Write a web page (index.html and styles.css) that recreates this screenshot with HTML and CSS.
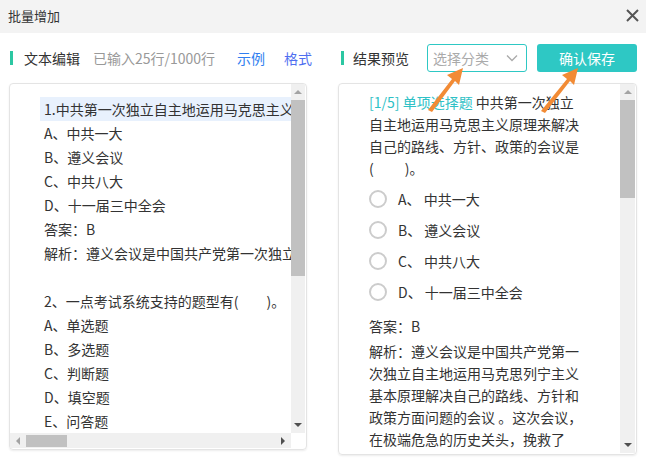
FILE: index.html
```html
<!DOCTYPE html>
<html lang="zh-CN">
<head>
    <meta charset="UTF-8">
    <title>批量增加</title>
    <link rel="stylesheet" href="styles.css">
</head>
<body>
    <div class="dialog">
        <div class="dialog-head">
            <span class="dialog-title">批量增加</span>
            <span class="close">
                <svg width="13" height="13" viewBox="0 0 13 13"><path d="M1 1L12 12M12 1L1 12" stroke="#555" stroke-width="2"/></svg>
            </span>
        </div>

        <div class="toolbar">
            <div class="tool-left">
                <span class="mark"></span>
                <span class="label">文本编辑</span>
                <span class="count">已输入25行/1000行</span>
                <a class="link">示例</a>
                <a class="link link2">格式</a>
            </div>
            <div class="tool-right">
                <span class="mark"></span>
                <span class="label">结果预览</span>
                <div class="select">
                    <span>选择分类</span>
                    <svg width="12" height="8" viewBox="0 0 12 8"><path d="M1 1.5L6 6.5L11 1.5" fill="none" stroke="#aaa" stroke-width="1.3"/></svg>
                </div>
                <button class="btn">确认保存</button>
            </div>
        </div>

        <div class="panels">
            <div class="panel">
                <div class="editor">
                    <div class="line current">1.中共第一次独立自主地运用马克思主义原理来解决自己的路线、方针、政策的会议是(　　)。</div>
                    <div class="line">A、中共一大</div>
                    <div class="line">B、遵义会议</div>
                    <div class="line">C、中共八大</div>
                    <div class="line">D、十一届三中全会</div>
                    <div class="line">答案：B</div>
                    <div class="line">解析：遵义会议是中国共产党第一次独立自主地运用马克思列宁主义基本原理</div>
                    <div class="line"></div>
                    <div class="line">2、一点考试系统支持的题型有(　　)。</div>
                    <div class="line">A、单选题</div>
                    <div class="line">B、多选题</div>
                    <div class="line">C、判断题</div>
                    <div class="line">D、填空题</div>
                    <div class="line">E、问答题</div>
                </div>
                <div class="vbar">
                    <span class="arr up"></span>
                    <div class="track"><div class="thumb" style="height:176px"></div></div>
                    <span class="arr down dark"></span>
                </div>
                <div class="hbar">
                    <span class="arr left"></span>
                    <div class="htrack"><div class="hthumb" style="width:41px"></div></div>
                    <span class="arr right dark"></span>
                </div>
                <div class="corner"></div>
            </div>

            <div class="panel preview">
                <div class="preview-body">
                    <div class="question">
                        <span class="qtype">[1/5] 单项选择题</span> 中共第一次独立<br>
                        自主地运用马克思主义原理来解决<br>
                        自己的路线、方针、政策的会议是<br>
                        (　　 )。
                    </div>
                    <ul class="options">
                        <li><span class="radio"></span>A、 中共一大</li>
                        <li><span class="radio"></span>B、 遵义会议</li>
                        <li><span class="radio"></span>C、 中共八大</li>
                        <li><span class="radio"></span>D、 十一届三中全会</li>
                    </ul>
                    <div class="answer">答案：B</div>
                    <div class="analysis">
                        解析：遵义会议是中国共产党第一<br>
                        次独立自主地运用马克思列宁主义<br>
                        基本原理解决自己的路线、方针和<br>
                        政策方面问题的会议 。这次会议，<br>
                        在极端危急的历史关头，挽救了<br>
                        党、挽救了红军、挽救了中国革命
                    </div>
                </div>
                <div class="vbar tall">
                    <span class="arr up"></span>
                    <div class="track"><div class="thumb" style="height:98px"></div></div>
                    <span class="arr down dark"></span>
                </div>
            </div>
        </div>

        <!-- 注释箭头 -->
        <svg class="pointers" width="646" height="467" viewBox="0 0 646 467">
            <g fill="#f28b35">
                <path d="M428 110L452 79L447 75L463 68L459 85L455 81L432 112Z"/>
                <path d="M541 111L567 79L562 75L578 68L574 85L570 81L545 113Z"/>
            </g>
        </svg>
    </div>
</body>
</html>
```

FILE: styles.css
```css
body {
    margin: 0;
    font-family: "Noto Sans CJK SC", "Noto Sans", sans-serif;
    color: #333;
    background: #fff;
}
.dialog {
    position: relative;
    width: 646px;
    height: 467px;
    overflow: hidden;
}
.dialog-head {
    height: 33px;
    background: #f3f3f3;
    display: flex;
    align-items: center;
    justify-content: space-between;
    padding: 0 7px 3px 8px;
    box-sizing: border-box;
}
.dialog-title {
    font-size: 13px;
}
.close {
    display: flex;
}
.toolbar {
    display: flex;
    align-items: center;
    height: 28px;
    margin-top: 11px;
    padding-left: 10px;
    font-size: 14px;
    white-space: nowrap;
}
.tool-left,
.tool-right {
    display: flex;
    align-items: center;
    flex: none;
}
.tool-left {
    width: 331px;
}
.tool-left > *,
.tool-right > * {
    flex: none;
}
.mark {
    width: 3px;
    height: 14px;
    background: #2cc7a2;
    margin-right: 11px;
}
.tool-right .mark {
    margin-right: 9px;
}
.label {
    color: #333;
}
.count {
    color: #999;
    margin-left: 13px;
}
.link {
    color: #2f7ef0;
    margin-left: 22px;
    cursor: pointer;
}
.link2 {
    color: #4f6ff0;
    margin-left: 19px;
}
.select {
    width: 100px;
    height: 28px;
    box-sizing: border-box;
    border: 1px solid #2ec8c4;
    border-radius: 3px;
    margin-left: 18px;
    display: flex;
    align-items: center;
    justify-content: space-between;
    padding: 0 8px 0 5px;
    color: #aaa;
}
.btn {
    width: 100px;
    height: 28px;
    margin-left: 10px;
    border: none;
    border-radius: 3px;
    background: #2ec8c4;
    color: #fff;
    font-family: inherit;
    font-size: 14px;
    cursor: pointer;
}
.panels {
    display: flex;
    gap: 31px;
    padding: 11px 9px 0 9px;
}
.panel {
    width: 298px;
    height: 367px;
    box-sizing: border-box;
    border: 1px solid #e4e4e4;
    border-radius: 4px;
    box-shadow: 0 1px 2px rgba(0,0,0,0.08);
    display: grid;
    grid-template-columns: 1fr 14px;
    grid-template-rows: 1fr 15px;
    overflow: hidden;
    padding: 0 1px 1px 0;
}
.editor {
    overflow: hidden;
    padding: 13px 0 0 30px;
    font-size: 14px;
}
.line {
    height: 24px;
    line-height: 24px;
    white-space: nowrap;
    padding-left: 4px;
}
.line.current {
    background: #e8f1fd;
}
.vbar {
    background: #f0f0f0;
    display: flex;
    flex-direction: column;
    align-items: center;
}
.track {
    flex: 1;
    width: 100%;
}
.thumb {
    background: #c1c1c1;
    width: 100%;
}
.hbar {
    background: #f0f0f0;
    display: flex;
    align-items: center;
}
.htrack {
    flex: 1;
    height: 100%;
    display: flex;
    align-items: center;
}
.hthumb {
    height: 12px;
    background: #c1c1c1;
}
.corner {
    background: #fff;
}
.arr {
    width: 0;
    height: 0;
    flex: none;
}
.vbar .arr {
    margin: 6px 0;
}
.up {
    border-left: 4px solid transparent;
    border-right: 4px solid transparent;
    border-bottom: 4px solid #a3a3a3;
}
.down {
    border-left: 4px solid transparent;
    border-right: 4px solid transparent;
    border-top: 4px solid #a3a3a3;
}
.left {
    border-top: 4px solid transparent;
    border-bottom: 4px solid transparent;
    border-right: 4px solid #a3a3a3;
    margin: 0 6px 0 6px;
}
.right {
    border-top: 4px solid transparent;
    border-bottom: 4px solid transparent;
    border-left: 4px solid #a3a3a3;
    margin: 0 6px 0 6px;
}
.down.dark { border-top-color: #505050; }
.right.dark { border-left-color: #505050; }
.preview {
    width: 299px;
    height: 372px;
    grid-template-columns: 1fr 15px;
    grid-template-rows: 1fr;
}
.preview-body {
    overflow: hidden;
    padding: 7px 0 0 30px;
    font-size: 14px;
    line-height: 22px;
    white-space: nowrap;
}
.qtype {
    color: #2ec1c6;
}
.options {
    list-style: none;
    margin: 4px 0 0 0;
    padding: 0;
}
.options li {
    display: flex;
    align-items: center;
    height: 31px;
}
.radio {
    width: 14px;
    height: 14px;
    border: 2px solid #cccccc;
    border-radius: 50%;
    margin-right: 11px;
}
.answer {
    margin-top: 8px;
}
.analysis {
    margin-top: 3px;
}
.pointers {
    position: absolute;
    left: 0;
    top: 0;
    pointer-events: none;
}
```
